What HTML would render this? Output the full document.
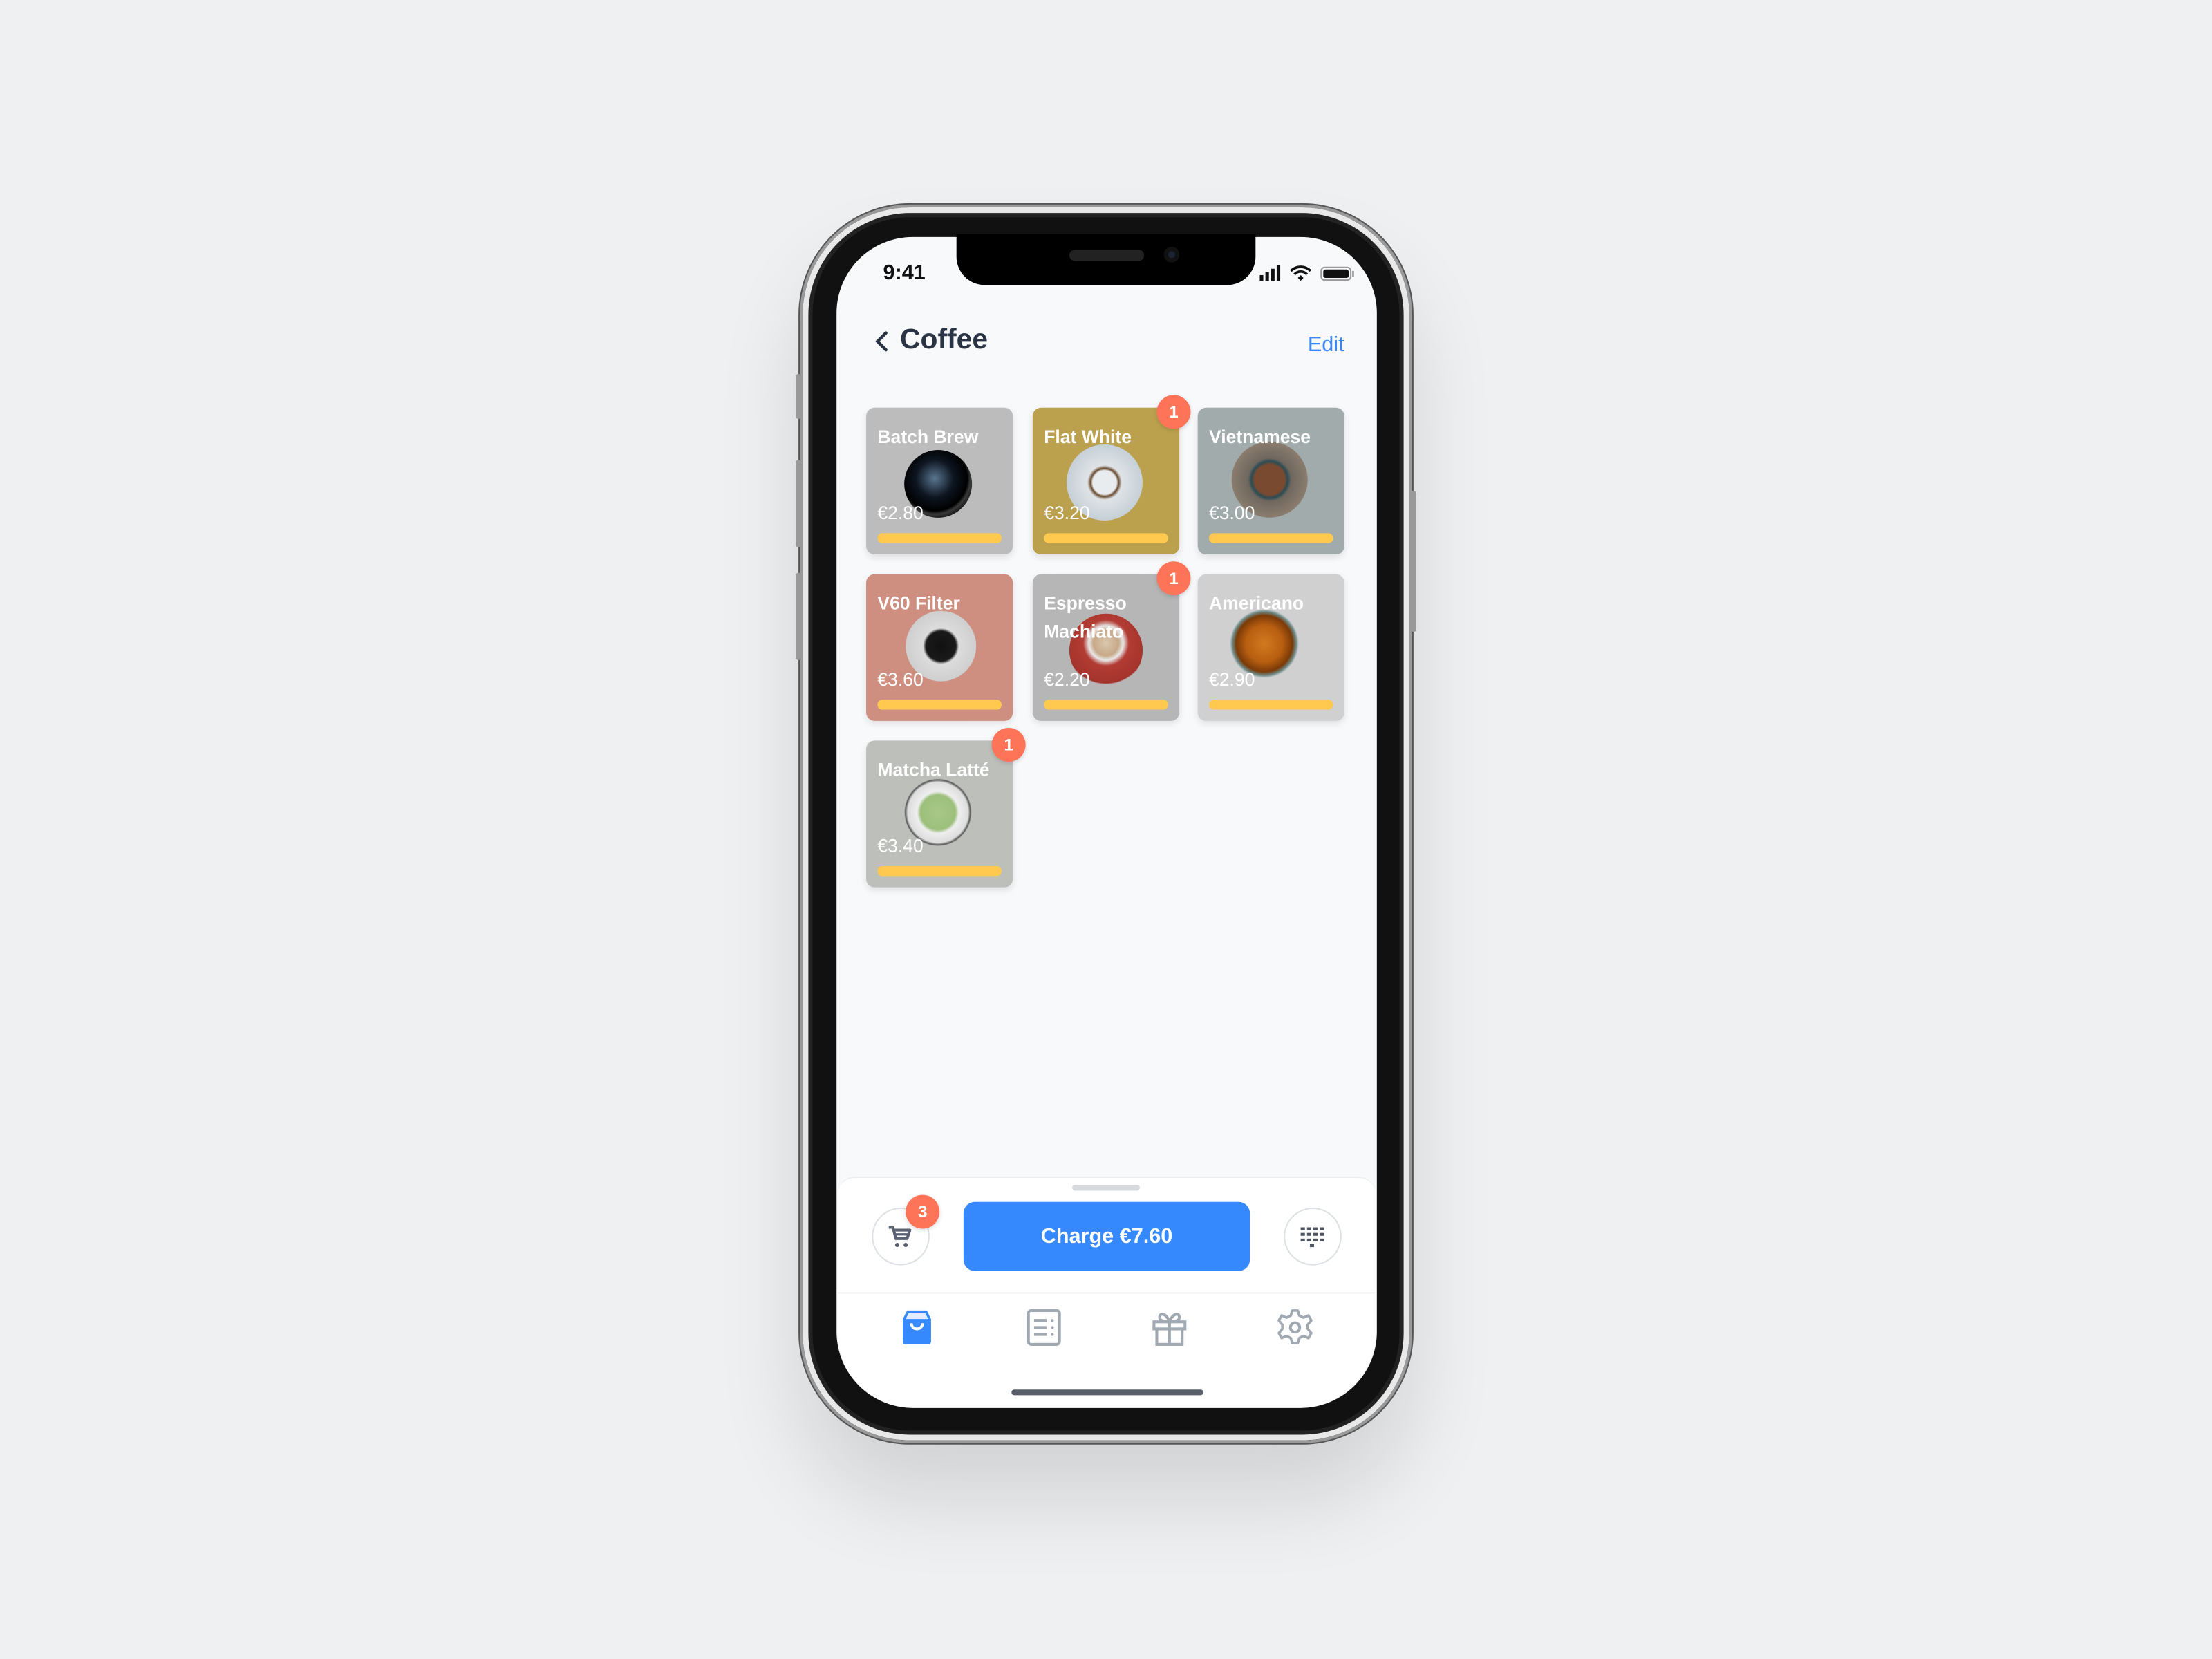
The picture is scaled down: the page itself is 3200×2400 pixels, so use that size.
<!DOCTYPE html>
<html><head><meta charset="utf-8"><style>
*{margin:0;padding:0;box-sizing:border-box}
html,body{width:3200px;height:2400px;overflow:hidden;background:#eff0f2}
#w{position:absolute;left:0;top:0;width:1568px;height:1176px;transform:scale(2.040816);transform-origin:0 0;font-family:"Liberation Sans",sans-serif}
.a{position:absolute}
.phone{left:567px;top:145px;width:434px;height:878px;border-radius:78px;background:#111;border:2px solid #9a9a9a;box-shadow:0 0 0 1px #555,inset 0 0 0 4px #e8e8e8,inset 0 0 0 7px #222,0 40px 60px rgba(0,0,0,.12)}
.screen{left:593px;top:168px;width:383px;height:830px;border-radius:54px;background:#f8f9fb;overflow:hidden}
.notch{left:678px;top:166px;width:212px;height:36px;background:#000;border-radius:0 0 20px 20px}
.card{width:104px;height:104px;border-radius:6px;overflow:hidden;box-shadow:0 2px 5px rgba(0,0,0,.1)}
.card .t{position:absolute;left:8px;top:11px;color:#fff;font-weight:bold;font-size:13px;line-height:20px;width:92px}
.card .p{position:absolute;left:8px;top:67px;color:#fff;font-size:13px}
.card .b{position:absolute;left:8px;right:8px;top:89px;height:7px;border-radius:4px;background:#ffc94f}
.cup{position:absolute;border-radius:50%}
.badge{width:24px;height:24px;border-radius:50%;background:#fe7458;color:#fff;font-size:12px;font-weight:bold;text-align:center;line-height:24px;box-shadow:0 1px 3px rgba(0,0,0,.15)}
</style></head><body><div id="w">
<div class="a phone"></div>
<div class="a" style="left:564px;top:265px;width:4px;height:32px;background:#999;border-radius:2px"></div>
<div class="a" style="left:564px;top:326px;width:4px;height:62px;background:#999;border-radius:2px"></div>
<div class="a" style="left:564px;top:406px;width:4px;height:62px;background:#999;border-radius:2px"></div>
<div class="a" style="left:1000px;top:348px;width:4px;height:100px;background:#999;border-radius:2px"></div>
<div class="a screen"></div>
<div class="a notch"></div>
<div class="a" style="left:758px;top:177px;width:53px;height:8px;border-radius:4px;background:#222"></div>
<div class="a" style="left:825px;top:175px;width:11px;height:11px;border-radius:50%;background:#1b2233;box-shadow:inset 0 0 0 3px #111"></div>
<div class="a" style="left:626px;top:185px;font-size:15px;font-weight:bold;color:#111">9:41</div>
<svg class="a" style="left:890px;top:186px" width="70" height="14" viewBox="0 0 70 14">
<rect x="3" y="9" width="2.5" height="4" fill="#111"/><rect x="7" y="7" width="2.5" height="6" fill="#111"/><rect x="11" y="4.5" width="2.5" height="8.5" fill="#111"/><rect x="15" y="2" width="2.5" height="11" fill="#111"/>
<path d="M25 6a10 10 0 0 1 14 0M27.5 8.5a6 6 0 0 1 9 0" stroke="#111" stroke-width="1.8" fill="none"/><path d="M30 11l2-2 2 2-2 2z" fill="#111"/>
<rect x="46.5" y="3.5" width="21" height="9" rx="2.5" fill="none" stroke="#999"/><rect x="48" y="5" width="18" height="6" rx="1.5" fill="#111"/><rect x="68.5" y="6" width="1.3" height="4" fill="#999"/>
</svg>
<svg class="a" style="left:619px;top:234px" width="12" height="16"><path d="M9 2L3 8l6 6" stroke="#2b3444" stroke-width="2.2" fill="none" stroke-linecap="round"/></svg>
<div class="a" style="left:638px;top:230px;font-size:20px;font-weight:bold;color:#2b3444">Coffee</div>
<div class="a" style="left:927px;top:236px;font-size:15px;color:#3a86f7">Edit</div>

<!-- cards -->
<div class="a card" style="left:614px;top:289px;background:#bcbcbc">
 <div class="cup" style="left:27px;top:30px;width:48px;height:48px;background:radial-gradient(circle at 45% 42%,#5a7590 0,#0d1520 35%,#000 60%,#3a3a3a 66%,#1a1a1a 74%,rgba(0,0,0,0) 76%)"></div>
 <div class="t">Batch Brew</div><div class="p">€2.80</div><div class="b"></div></div>
<div class="a card" style="left:732px;top:289px;background:#bba14e">
 <div class="cup" style="left:24px;top:26px;width:54px;height:54px;background:radial-gradient(circle at 50% 50%,#e8ecef 0,#e8ecef 22%,#6a4a30 26%,#dfe3e6 32%,#c6d0d8 70%,rgba(0,0,0,0) 72%)"></div>
 <div class="t">Flat White</div><div class="p">€3.20</div><div class="b"></div></div>
<div class="a card" style="left:849px;top:289px;background:#a2abab">
 <div class="cup" style="left:24px;top:24px;width:54px;height:54px;background:radial-gradient(circle at 50% 50%,#7a4a30 0,#7a4a30 28%,#2a4c55 34%,#6f675e 40%,#8a7c6e 70%,rgba(0,0,0,0) 72%)"></div>
 <div class="t">Vietnamese</div><div class="p">€3.00</div><div class="b"></div></div>
<div class="a card" style="left:614px;top:407px;background:#ce8e80">
 <div class="cup" style="left:28px;top:26px;width:50px;height:50px;background:radial-gradient(circle at 50% 50%,#111 0,#1a1a1a 30%,#dcdcdc 36%,#cfcfcf 70%,rgba(0,0,0,0) 72%)"></div>
 <div class="t">V60 Filter</div><div class="p">€3.60</div><div class="b"></div></div>
<div class="a card" style="left:732px;top:407px;background:#b6b6b6">
 <div class="cup" style="left:26px;top:28px;width:52px;height:52px;background:radial-gradient(circle at 50% 40%,#d9c8b0 0,#c8a888 22%,#e8e8e8 30%,#b23c34 40%,#a3342c 70%,rgba(0,0,0,0) 72%)"></div>
 <div class="t">Espresso Machiato</div><div class="p">€2.20</div><div class="b"></div></div>
<div class="a card" style="left:849px;top:407px;background:#d0d0d0">
 <div class="cup" style="left:22px;top:24px;width:56px;height:56px;background:radial-gradient(circle at 45% 45%,#d07a20 0,#b85e10 30%,#7a3a08 46%,#6c8a88 52%,rgba(0,0,0,0) 56%)"></div>
 <div class="t">Americano</div><div class="p">€2.90</div><div class="b"></div></div>
<div class="a card" style="left:614px;top:525px;background:#bdbfbb">
 <div class="cup" style="left:24px;top:24px;width:56px;height:56px;background:radial-gradient(circle at 48% 48%,#a8c888 0,#9cc07c 30%,#eee 36%,#ddd 52%,#555 56%,rgba(0,0,0,0) 58%)"></div>
 <div class="t">Matcha Latté</div><div class="p">€3.40</div><div class="b"></div></div>
<div class="a badge" style="left:820px;top:280px">1</div>
<div class="a badge" style="left:820px;top:398px">1</div>
<div class="a badge" style="left:703px;top:516px">1</div>

<!-- bottom -->
<div class="a" style="left:594px;top:834px;width:381px;height:164px;background:#fff;border-top:1px solid #eceef1;border-radius:12px 12px 54px 54px"></div>
<div class="a" style="left:760px;top:840px;width:48px;height:4px;border-radius:2px;background:#d6d9dd"></div>
<div class="a" style="left:618px;top:856px;width:41px;height:41px;border-radius:50%;border:1px solid #dde0e4;background:#fff"></div>
<svg class="a" style="left:628px;top:866px" width="20" height="20" viewBox="0 0 20 20"><path d="M2 4h3l2 8h8l2-6H6" stroke="#5a6170" stroke-width="2" fill="none" stroke-linejoin="round"/><path d="M7 9h9" stroke="#5a6170" stroke-width="1.6"/><circle cx="8" cy="16.5" r="1.5" fill="#5a6170"/><circle cx="14" cy="16.5" r="1.5" fill="#5a6170"/></svg>
<div class="a badge" style="left:642px;top:847px">3</div>
<div class="a" style="left:683px;top:852px;width:203px;height:49px;border-radius:8px;background:#3689fc;color:#fff;font-weight:bold;font-size:15px;text-align:center;line-height:49px">Charge €7.60</div>
<div class="a" style="left:910px;top:856px;width:41px;height:41px;border-radius:50%;border:1px solid #dde0e4;background:#fff"></div>
<svg class="a" style="left:920px;top:868px" width="22" height="20" viewBox="0 0 22 20"><g fill="#4d5462"><rect x="2" y="2" width="3" height="2"/><rect x="6.5" y="2" width="3" height="2"/><rect x="11" y="2" width="3" height="2"/><rect x="15.5" y="2" width="3" height="2"/><rect x="2" y="6" width="3" height="2"/><rect x="6.5" y="6" width="3" height="2"/><rect x="11" y="6" width="3" height="2"/><rect x="15.5" y="6" width="3" height="2"/><rect x="2" y="10" width="3" height="2"/><rect x="6.5" y="10" width="3" height="2"/><rect x="11" y="10" width="3" height="2"/><rect x="15.5" y="10" width="3" height="2"/><rect x="8.5" y="14" width="3" height="2"/></g></svg>
<div class="a" style="left:594px;top:916px;width:381px;height:1px;background:#eef0f2"></div>
<svg class="a" style="left:637px;top:927px" width="26" height="28" viewBox="0 0 26 28"><path d="M6 2h14l3 6v16a2 2 0 0 1-2 2H5a2 2 0 0 1-2-2V8z" fill="#3689fc"/><path d="M7 4h12l2 4H5z" fill="#fff" opacity=".85"/><path d="M9 11a4 4 0 0 0 8 0" stroke="#fff" stroke-width="2" fill="none"/></svg>
<svg class="a" style="left:727px;top:927px" width="26" height="28" viewBox="0 0 26 28"><rect x="2" y="2" width="22" height="24" rx="2" fill="none" stroke="#a0a8b2" stroke-width="2"/><path d="M6 9h9M6 14h9M6 19h9" stroke="#a0a8b2" stroke-width="2"/><circle cx="19" cy="9" r="1" fill="#a0a8b2"/><circle cx="19" cy="14" r="1" fill="#a0a8b2"/><circle cx="19" cy="19" r="1" fill="#a0a8b2"/></svg>
<svg class="a" style="left:816px;top:927px" width="26" height="28" viewBox="0 0 26 28"><rect x="2" y="10" width="22" height="5" fill="none" stroke="#a0a8b2" stroke-width="2"/><rect x="4" y="15" width="18" height="11" fill="none" stroke="#a0a8b2" stroke-width="2"/><path d="M13 10v16M13 10c-2-6-7-7-7-3 0 2 3 3 7 3M13 10c2-6 7-7 7-3 0 2-3 3-7 3" stroke="#a0a8b2" stroke-width="2" fill="none"/></svg>
<svg class="a" style="left:905px;top:927px" width="26" height="28" viewBox="0 0 26 28"><path d="M11 2h4l1 3.5 3 1.5 3.5-1.5 2 3.5-2.5 3v3l2.5 3-2 3.5-3.5-1.5-3 1.5-1 3.5h-4l-1-3.5-3-1.5-3.5 1.5-2-3.5 2.5-3v-3l-2.5-3 2-3.5 3.5 1.5 3-1.5z" fill="none" stroke="#a0a8b2" stroke-width="1.8" stroke-linejoin="round"/><circle cx="13" cy="14" r="3.3" fill="none" stroke="#a0a8b2" stroke-width="2"/></svg>
<div class="a" style="left:717px;top:985px;width:136px;height:4px;border-radius:2px;background:#585f6b"></div>
</div></body></html>
